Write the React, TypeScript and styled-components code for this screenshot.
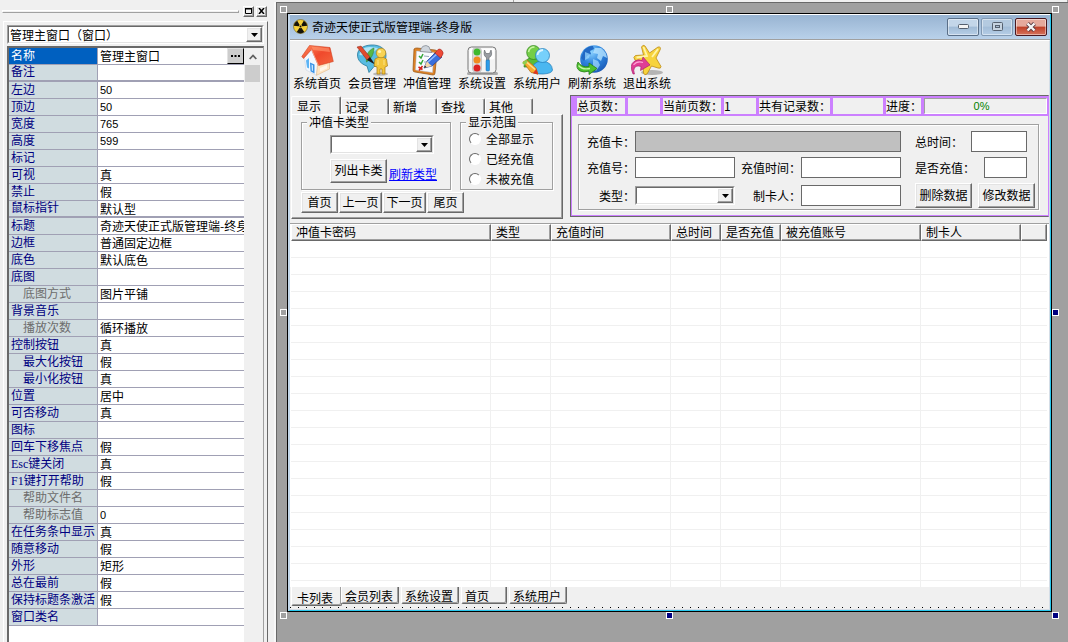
import React from "react";
import styled, { createGlobalStyle, css } from "styled-components";

const FACE = "#f0f0f0";
const SHADOW = "#a0a0a0";
const DARK = "#696969";
const PURPLE = "#cc80ff";

const GlobalStyle = createGlobalStyle`
  *, *::before, *::after { box-sizing: border-box; }
  body {
    margin: 0;
    background: ${SHADOW};
    color: #000;
    font: 12px/16px "Noto Sans CJK SC", "Liberation Sans", sans-serif;
  }
  button, input, select { font: inherit; color: inherit; border-radius: 0; margin: 0; padding: 0; }
`;

const raised = css`
  background: ${FACE};
  border: 1px solid;
  border-color: #fff ${DARK} ${DARK} #fff;
  box-shadow: inset -1px -1px 0 ${SHADOW}, inset 1px 1px 0 #e3e3e3;
`;

const Screen = styled.div`
  display: flex;
  flex-direction: column;
  min-height: 100vh;
`;

const TopStrip = styled.div`
  display: flex;
  height: 2px;
  flex: none;
  background: ${FACE};
`;

const StripSegment = styled.div<{ $grow: number }>`
  flex: ${(p) => p.$grow};
  border-right: 1px solid ${SHADOW};
`;

const Main = styled.div`
  display: flex;
  flex: 1;
`;

/* ---------- property sheet ---------- */

const Sidebar = styled.aside`
  flex: 0 0 276px;
  min-width: 0;
  display: flex;
  flex-direction: column;
  background: ${FACE};
  border-right: 2px solid #f8f8f8;
`;

const GripBar = styled.div`
  display: flex;
  align-items: center;
  gap: 2px;
  height: 19px;
  padding: 0 7px 1px 2px;
`;

const Grip = styled.div`
  flex: 1;
  height: 3px;
  margin-right: 2px;
  border: 1px solid;
  border-color: #fff ${SHADOW} ${SHADOW} #fff;
`;

const GripButton = styled.button`
  ${raised}
  width: 11px;
  height: 11px;
  display: grid;
  place-items: center;
`;

const SheetFrame = styled.div`
  flex: 1;
  display: flex;
  flex-direction: column;
  gap: 1px;
  margin: 0 6px 0 3px;
  padding: 3px 3px 0 3px;
  border-top: 1px solid #fff;
  border-left: 1px solid #fff;
  border-right: 1px solid ${DARK};
`;

const PickerBox = styled.div<{ $width?: number }>`
  position: relative;
  width: ${(p) => (p.$width ? `${p.$width}px` : "auto")};
  height: 19px;
  border: 1px solid;
  border-color: ${SHADOW} #fff #fff ${SHADOW};
`;

const Picker = styled.select`
  appearance: none;
  display: block;
  width: 100%;
  height: 17px;
  padding: 0 18px 0 1px;
  border: 1px solid;
  border-color: ${DARK} #e3e3e3 #e3e3e3 ${DARK};
  background: #fff;
  line-height: 15px;
  outline: none;
`;

const PickerArrow = styled.span`
  ${raised}
  position: absolute;
  top: 1px;
  right: 1px;
  width: 16px;
  height: 15px;
  display: grid;
  place-items: center;
  pointer-events: none;
`;

const SheetBody = styled.div`
  flex: 1;
  display: flex;
  margin-top: 1px;
  border: 2px solid ${DARK};
  border-bottom: 0;
  border-right: 1px solid ${SHADOW};
  background: #fff;
`;

const SheetRows = styled.div`
  flex: 1;
  min-width: 0;
`;

const PropTable = styled.table`
  width: 100%;
  table-layout: fixed;
  border-collapse: separate;
  border-spacing: 0;
`;

const labelColor = { normal: "#000080", muted: "#6d6d6d", active: "#fff" };

const PropLabel = styled.th<{ $tone: "normal" | "muted" | "active"; $indent: boolean; $group: boolean }>`
  height: 17px;
  padding: 0 0 0 ${(p) => (p.$indent ? 14 : 2)}px;
  border-right: 1px solid #a0a0b4;
  border-bottom: ${(p) => (p.$group ? 2 : 1)}px solid #a0a0b4;
  background: ${(p) => (p.$tone === "active" ? "#0060c0" : "#d0dce0")};
  color: ${(p) => labelColor[p.$tone]};
  font-family: "Liberation Serif", "Noto Sans CJK SC", serif;
  font-weight: 400;
  line-height: ${(p) => (p.$group ? 15 : 16)}px;
  text-align: left;
  white-space: nowrap;
`;

const PropValue = styled.td<{ $group: boolean }>`
  height: 17px;
  padding: 0;
  border-bottom: ${(p) => (p.$group ? 2 : 1)}px solid #a0a0b4;
  line-height: ${(p) => (p.$group ? 15 : 16)}px;
`;

const ValueLine = styled.div<{ $numeric: boolean }>`
  display: flex;
  padding-left: 2px;
  font-family: ${(p) => (p.$numeric ? '"Liberation Sans", sans-serif' : "inherit")};
  font-size: ${(p) => (p.$numeric ? 11 : 12)}px;
  overflow: hidden;
  white-space: nowrap;
`;

const MoreButton = styled.button`
  width: 17px;
  height: 16px;
  margin-left: auto;
  display: grid;
  place-items: center;
  background: #cdcdcd;
  border: 1px solid;
  border-color: #e3e3e3 #000 #000 #e3e3e3;
`;

const ScrollTrack = styled.div`
  flex: 0 0 19px;
  padding-left: 1px;
  background: ${FACE};
`;

const ScrollUp = styled.button`
  display: grid;
  place-items: center;
  width: 16px;
  height: 17px;
  border: 0;
  background: ${FACE};
`;

const ScrollThumb = styled.div`
  width: 15px;
  height: 17px;
  background: #cdcdcd;
`;

/* ---------- designer canvas ---------- */

const Canvas = styled.main`
  flex: 1;
  display: flex;
  min-width: 0;
  padding: 10px 16px 30px 10px;
  border-top: 1px solid ${DARK};
  border-left: 1px solid ${DARK};
  background: ${SHADOW};
`;

const DesignedWindow = styled.section`
  position: relative;
  flex: 1;
  display: flex;
  flex-direction: column;
  min-width: 0;
  border: 1px solid #000;
  background: ${FACE};
`;

const Handle = styled.span<{ $x: string; $y: string; $solid?: boolean }>`
  position: absolute;
  width: 7px;
  height: 7px;
  ${(p) => (p.$x === "left" ? "left: -8px;" : p.$x === "right" ? "right: -8px;" : "left: calc(50% - 4px);")}
  ${(p) => (p.$y === "top" ? "top: -8px;" : p.$y === "bottom" ? "bottom: -8px;" : "top: calc(50% - 4px);")}
  border: 1px solid #fff;
  background: ${(p) => (p.$solid ? "#000080" : "#a0a0a0")};
`;

const WindowInner = styled.div`
  flex: 1;
  display: flex;
  flex-direction: column;
  border-left: 2px solid #c3d7ea;
  border-right: 1px solid #28c8ee;
  border-bottom: 1px solid #28c8ee;
`;

const TitleBar = styled.header`
  display: flex;
  align-items: center;
  height: 26px;
  padding: 0 3px 1px 3px;
  background: linear-gradient(#98b4d2, #b9d1ea);
  border-top: 1px solid #fff;
  border-bottom: 1px solid ${SHADOW};
`;

const TitleText = styled.h1`
  flex: 1;
  margin: 0 0 0 4px;
  font-size: 12px;
  font-weight: 400;
  line-height: 16px;
`;

const captionTones = {
  plain: css`
    background: linear-gradient(#c3d6e9 0 45%, #a0bbd6 50%, #b7cee6);
    border-color: #5a6f88;
  `,
  faded: css`
    background: linear-gradient(#b4cae0 0 45%, #a3bdd8 50%, #b5cde6);
    border-color: #8198b2;
  `,
  close: css`
    background: linear-gradient(#e5a99c 0 45%, #bf3f27 50%, #d5735c);
    border-color: #4b1820;
  `,
};

const CaptionButton = styled.button<{ $tone: keyof typeof captionTones }>`
  width: 32px;
  height: 18px;
  margin-left: 2px;
  display: grid;
  place-items: center;
  border: 1px solid;
  border-radius: 2px;
  box-shadow: inset 0 0 0 1px rgba(255, 255, 255, 0.45);
  ${(p) => captionTones[p.$tone]}
`;

const WindowContent = styled.div`
  flex: 1;
  display: flex;
  flex-direction: column;
  border-top: 1px solid #fff;
  border-right: 1px solid #d5dde6;
  border-bottom: 1px solid #d5dde6;
`;

const Toolbar = styled.nav`
  display: flex;
  height: 54px;
`;

const ToolItem = styled.button`
  width: 55px;
  display: flex;
  flex-direction: column;
  align-items: center;
  padding: 3px 1px 0 0;
  border: 0;
  background: none;
  line-height: 14px;
  white-space: nowrap;
`;

const UpperRow = styled.div`
  display: flex;
  align-items: flex-start;
  gap: 7px;
  padding-left: 1px;
`;

const QueryPane = styled.div`
  flex: 0 0 272px;
  padding-top: 1px;
`;

const TabStrip = styled.div`
  display: flex;
  align-items: flex-end;
  height: 18px;
`;

const TopTab = styled.button<{ $active: boolean }>`
  width: ${(p) => (p.$active ? 50 : 48)}px;
  height: ${(p) => (p.$active ? 18 : 16)}px;
  padding-left: ${(p) => (p.$active ? 5 : 3)}px;
  border: 1px solid;
  border-color: #fff ${DARK} transparent #fff;
  border-bottom: 0;
  border-radius: 2px 2px 0 0;
  box-shadow: inset -1px 0 0 ${SHADOW};
  background: ${FACE};
  line-height: 14px;
  text-align: left;
`;

const TabBody = styled.div`
  display: flex;
  flex-direction: column;
  gap: 2px;
  padding: 0 8px 5px 9px;
  border: 1px solid;
  border-color: #fff ${DARK} ${DARK} #fff;
  box-shadow: inset -1px -1px 0 ${SHADOW};
`;

const GroupRow = styled.div`
  display: flex;
  gap: 9px;
`;

const Group = styled.fieldset<{ $width?: number }>`
  width: ${(p) => (p.$width ? `${p.$width}px` : "auto")};
  min-width: 0;
  margin: 0;
  padding: 0;
  border: 1px solid ${SHADOW};
  box-shadow: 1px 1px 0 #fff, inset 1px 1px 0 #fff;
`;

const Legend = styled.legend`
  margin-left: 5px;
  padding: 0 2px;
  background: ${FACE};
  line-height: 14px;
`;

const TypeControls = styled.div`
  display: flex;
  flex-direction: column;
  gap: 5px;
  padding: 6px 0 6px 28px;
`;

const ActionLine = styled.div`
  display: flex;
  align-items: center;
  gap: 2px;
`;

const PushButton = styled.button<{ $width: number; $height: number }>`
  ${raised}
  width: ${(p) => p.$width}px;
  height: ${(p) => p.$height}px;
  padding-bottom: 2px;
  line-height: 16px;
  white-space: nowrap;
`;

const TextLink = styled.a`
  padding-top: 6px;
  color: #0000ff;
  text-decoration: underline;
`;

const RadioLine = styled.label`
  display: flex;
  align-items: center;
  gap: 5px;
  height: 20px;
  padding-left: 8px;
`;

const Radio = styled.input`
  appearance: none;
  width: 12px;
  height: 12px;
  border: 1px solid;
  border-color: ${DARK} #fff #fff ${DARK};
  border-radius: 50%;
  background: #fff;
`;

const PagerRow = styled.div`
  display: flex;
  gap: 1px;
`;

const CardPane = styled.div`
  flex: 1;
  min-width: 0;
  border: 1px solid ${DARK};
  border-right: 1px solid ${PURPLE};
  box-shadow: inset 1px -1px 0 ${PURPLE};
`;

const StatusStrip = styled.div`
  display: flex;
  gap: 3px;
  padding: 2px 1px 2px 6px;
  background: ${PURPLE};
`;

const StatusCell = styled.div<{ $width: number }>`
  width: ${(p) => p.$width}px;
  height: 16px;
  background: ${FACE};
  white-space: nowrap;
`;

const Progress = styled.div`
  flex: 1;
  height: 16px;
  border: 1px solid;
  border-color: ${SHADOW} #fff #fff ${SHADOW};
  background: ${FACE};
  color: #008000;
  font: 11px/14px "Liberation Sans", sans-serif;
  text-align: center;
  padding-right: 8px;
`;

const CardGroup = styled(Group)`
  margin: 8px 9px 6px 7px;
`;

const CardForm = styled.div`
  display: grid;
  grid-template-columns: 49px minmax(60px, 1fr) 66px minmax(60px, 1fr) 134px;
  row-gap: 5px;
  align-items: center;
  padding: 6px 3px 1px 7px;
`;

const FieldLabel = styled.label`
  text-align: right;
  white-space: nowrap;
`;

const Field = styled.input<{ $wide?: boolean; $disabledLook?: boolean }>`
  grid-column: ${(p) => (p.$wide ? "span 3" : "auto")};
  width: 100%;
  min-width: 0;
  height: 21px;
  padding: 0 2px;
  border: 1px solid ${DARK};
  background: ${(p) => (p.$disabledLook ? "#c0c0c0" : "#fff")};
  outline: none;
`;

const SideCell = styled.div`
  display: flex;
  align-items: center;
  padding-left: 14px;
`;

const SideField = styled(Field)<{ $size: number }>`
  width: ${(p) => p.$size}px;
  margin: 0 8px 0 auto;
`;

const ButtonCell = styled(SideCell)`
  gap: 6px;
`;

const TablePane = styled.div`
  flex: 1;
  margin-top: 4px;
  padding: 0 2px 0 1px;
  border-top: 1px solid ${SHADOW};
  background: #fff;
`;

const CardTable = styled.table`
  width: 100%;
  table-layout: fixed;
  border-collapse: separate;
  border-spacing: 0;
`;

const HeadCell = styled.th`
  height: 17px;
  padding: 0 0 1px 4px;
  border: 1px solid;
  border-color: #fff ${DARK} ${DARK} #fff;
  box-shadow: inset -1px -1px 0 ${SHADOW};
  background: ${FACE};
  font-weight: 400;
  line-height: 14px;
  text-align: left;
  white-space: nowrap;
`;

const BodyCell = styled.td<{ $last: boolean }>`
  height: ${(p) => (p.$last ? 6 : 17)}px;
  padding: 0;
  border-right: 1px solid ${FACE};
  border-bottom: ${(p) => (p.$last ? 0 : 1)}px solid ${FACE};
  &:last-child { border-right: 0; }
`;

const BottomTabs = styled.div`
  display: flex;
  align-items: flex-start;
  gap: 2px;
  height: 20px;
  padding-left: 1px;
`;

const BottomTab = styled.button<{ $active: boolean; $width: number }>`
  width: ${(p) => p.$width}px;
  height: ${(p) => (p.$active ? 19 : 17)}px;
  margin-right: ${(p) => (p.$active ? -3 : 0)}px;
  padding: ${(p) => (p.$active ? "3px 0 0 5px" : "0 0 0 3px")};
  border: 1px solid;
  border-color: transparent ${DARK} ${DARK} #fff;
  border-top: 0;
  border-radius: 0 0 2px 2px;
  box-shadow: inset -1px -1px 0 ${SHADOW};
  background: ${FACE};
  line-height: 15px;
  text-align: left;
  white-space: nowrap;
`;

const DotRow = styled.div`
  height: 1px;
  margin-bottom: 1px;
  background: repeating-linear-gradient(90deg, #000 0 1px, transparent 1px 8px);
`;

/* ---------- drawings ---------- */

const ArrowDown = () => (
  <svg width="7" height="4" viewBox="0 0 7 4" aria-hidden="true">
    <path d="M0 0H7L3.5 4Z" fill="#000" />
  </svg>
);

const RadiationIcon = () => (
  <svg width="15" height="15" viewBox="0 0 15 15" aria-hidden="true">
    <circle cx="7.5" cy="7.5" r="7" fill="#f4d03a" stroke="#6b5b1c" strokeWidth=".6" />
    <path d="M7.5 7.5L.8 6.8A6.7 6.7 0 0 1 4.2 1.7ZM7.5 7.5L10.8 1.7A6.7 6.7 0 0 1 14.2 6.8ZM7.5 7.5L11.3 13.1A6.7 6.7 0 0 1 3.7 13.1Z" fill="#14120a" />
    <circle cx="7.5" cy="7.5" r="1.7" fill="#f4d03a" />
    <circle cx="7.5" cy="7.5" r="1" fill="#14120a" />
  </svg>
);

const HomeIcon = () => (
  <svg width="33" height="32" viewBox="0 0 33 32" aria-hidden="true">
    <defs>
      <linearGradient id="roof" x1="0" y1="0" x2="1" y2="1">
        <stop offset="0" stopColor="#ff8a5c" />
        <stop offset=".5" stopColor="#f0492c" />
        <stop offset="1" stopColor="#f4683e" />
      </linearGradient>
    </defs>
    <path d="M10.500 5.500L3.500 13.500L5 26L15.500 31.300L17 21Z" fill="#f3f8ff" stroke="#c2cddd" strokeWidth=".5" />
    <path d="M15.500 31.300L28.500 25V17L16.500 20Z" fill="#ffe6c4" stroke="#dcae7a" strokeWidth=".5" />
    <path d="M19 24L26 21V24.500L19 27.500Z" fill="#fff7ea" />
    <path d="M5 16.500L8 14V24.500L6 23.500Z" fill="#5db4f4" />
    <path d="M9 18.500L13.500 20.500V29.500L9.500 27.300Z" fill="#3b93e6" />
    <path d="M10.500 20.500L12 21.200V27L10.800 26.400Z" fill="#c7e7ff" />
    <path d="M8.500 1.500L29 3.500L32.300 17.500L17.500 21.500L10.500 5.500L2.500 14.500L.8 12.500Z" fill="url(#roof)" stroke="#d0401f" strokeWidth=".6" />
    <path d="M10.500 2.500L28 4.300L29 8L12 6Z" fill="#ff9a72" opacity=".6" />
    <path d="M10.500 5.500L17.500 21.500" stroke="#ffb095" strokeWidth=".8" />
  </svg>
);

const MemberIcon = () => (
  <svg width="33" height="32" viewBox="0 0 33 32" aria-hidden="true">
    <path d="M15 1C24 .5 30 5 30 11.500C30 18 25 22 18 22.500L13 28.500L11 22C5 20 1.500 16 1.500 11C1.500 5 7 1.500 15 1Z" fill="#58bce2" stroke="#27789c" strokeWidth=".8" />
    <path d="M14 3C8 3 3.500 6 3.500 11C10 12 18 9 22 4Z" fill="#c0ecf8" opacity=".85" />
    <path d="M18 4C12 6 9.500 12 10.500 18C15 15 18 10 18 4Z" fill="#58b847" stroke="#2e7a26" strokeWidth=".5" />
    <path d="M1 3L5 2L14 13L11 16Z" fill="#e14a2e" stroke="#8a2215" strokeWidth=".5" />
    <path d="M11 16L14 13L19 20.500Z" fill="#1c1c1c" />
    <ellipse cx="24.500" cy="30" rx="7.500" ry="1.800" fill="#8d8d8d" opacity=".55" />
    <path d="M19 15Q25 11 30.500 15L31.500 22L29 23V30H26V25H24V30H21V23L18 22Z" fill="#f3c63c" stroke="#a97a13" strokeWidth=".7" />
    <circle cx="25" cy="9" r="4.800" fill="#f8d353" stroke="#b08318" strokeWidth=".7" />
    <circle cx="23.500" cy="7.500" r="1.600" fill="#fff3b8" />
    <path d="M22 16V21M28 16V21" stroke="#fbe48a" />
  </svg>
);

const RechargeIcon = () => (
  <svg width="33" height="32" viewBox="0 0 33 32" aria-hidden="true">
    <path d="M3 5Q4 4 6 4L24 6Q26 6 26 8L24 29Q24 31 22 31L4 28Q2 28 2 26Z" fill="#dd8226" stroke="#93500f" strokeWidth=".7" />
    <path d="M5.500 7L23 8.500L21.500 28.500L4.500 26Z" fill="#f9fbff" stroke="#b5bfce" strokeWidth=".5" />
    <path d="M10 5Q11 1.500 15 1.500Q19 2 19 5.500L21 8.500L9 7.500Z" fill="#cfd5dc" stroke="#7b828c" strokeWidth=".7" />
    <path d="M8 12L10 14L12 10M8 18L10 20L12 16" fill="none" stroke="#36a63a" strokeWidth="1.500" />
    <path d="M7.500 23L11.500 25.500M11.500 22L8 26.500" stroke="#d51d17" strokeWidth="1.500" />
    <path d="M13 12L18 12.500M13 18H17" stroke="#9aa7ba" />
    <path d="M13 24L16 17L25 8L31 13L21 22Z" fill="#3a6fdc" stroke="#1b3b93" strokeWidth=".7" />
    <path d="M17 18L26 10" stroke="#93bdff" strokeWidth="1.500" />
    <path d="M24 9L27 5.500Q29 4 31 6.500T31.500 11L29.500 14Z" fill="#ee4a38" stroke="#a2231a" strokeWidth=".6" />
    <path d="M13 24L16 17Q18 20 21 22Z" fill="#f3d7ab" />
    <path d="M13 24L14 21.500L15.500 23.200Z" fill="#222" />
  </svg>
);

const SettingsIcon = () => (
  <svg width="33" height="32" viewBox="0 0 33 32" aria-hidden="true">
    <rect x="1" y="28" width="31" height="3" rx="1.500" fill="#a9a9a9" />
    <rect x="2" y="3" width="28" height="26" rx="3.500" fill="#f3f3f3" stroke="#777" />
    <rect x="3.500" y="4.500" width="25" height="11" rx="2" fill="#fff" />
    <rect x="6.500" y="4" width="9" height="24" rx="3" fill="#d9d9d9" stroke="#a5a5a5" strokeWidth=".5" />
    <circle cx="11" cy="8" r="3.500" fill="#3fb92e" />
    <circle cx="11" cy="16" r="3.500" fill="#f08a1f" />
    <circle cx="11" cy="24" r="3.500" fill="#dc2222" />
    <path d="M18.500 6Q17 12 20.500 13.500V17H23V13.500Q27 12 25 6L23.500 9.500H20Z" fill="#9a9ea3" stroke="#606468" strokeWidth=".6" />
    <rect x="20" y="16" width="3.500" height="11" rx="1" fill="#2d9be8" stroke="#1769aa" strokeWidth=".5" />
  </svg>
);

const UsersIcon = () => (
  <svg width="33" height="32" viewBox="0 0 33 32" aria-hidden="true">
    <path d="M3 23Q3 14 12 13.500Q19 14 20 23Z" fill="#59bd37" stroke="#2c7f18" strokeWidth=".7" />
    <ellipse cx="12.500" cy="8.500" rx="6.800" ry="7" fill="#74ce48" stroke="#2c7f18" strokeWidth=".7" />
    <path d="M7.500 8Q8.500 3 13.500 3" fill="none" stroke="#c9f5a5" strokeWidth="1.500" />
    <path d="M11 28Q10 18 21 17Q31 18 31.500 26Q31 29.500 22 30Q13 30 11 28Z" fill="#4bb7f0" stroke="#1a79b8" strokeWidth=".7" />
    <circle cx="21.500" cy="11.500" r="7" fill="#76d0fb" stroke="#1a79b8" strokeWidth=".7" />
    <path d="M16.500 11Q17 6.500 22 6" fill="none" stroke="#dcf6ff" strokeWidth="1.800" />
    <path d="M2 18L6 16L15 24L17 30L10 28.500Z" fill="#f8a92d" stroke="#b56a0d" strokeWidth=".7" />
    <path d="M1 19L5 15.500L7 18L3.500 21Z" fill="#8fce4f" />
    <path d="M12 29L17 30.500L15.500 25Z" fill="#dd3320" />
    <path d="M6 18.500L14 25.500" stroke="#ffe08c" strokeWidth="1.500" />
  </svg>
);

const RefreshIcon = () => (
  <svg width="33" height="32" viewBox="0 0 33 32" aria-hidden="true">
    <defs>
      <radialGradient id="globe" cx=".4" cy=".25" r=".8">
        <stop offset="0" stopColor="#8cd3ff" />
        <stop offset=".5" stopColor="#2e85de" />
        <stop offset="1" stopColor="#1a58b4" />
      </radialGradient>
    </defs>
    <circle cx="18" cy="15" r="13.800" fill="url(#globe)" />
    <path d="M8 6Q13 1.500 17 2L18 5L14 7L15 10L11 12L8 17L5 14Z" fill="#2169c4" />
    <path d="M19 4L25 4Q30.500 8 31 14L27 12L25 17L21 14L22 10L17 9Z" fill="#b7e4ff" opacity=".8" />
    <path d="M9 8L14 10L13 14L9 16Z" fill="#9bd9ff" opacity=".7" />
    <path d="M17 15L22 17L24 21L20 27L17 22Z" fill="#a5dcff" opacity=".7" />
    <path d="M2 18Q-1 24 4 27Q8 29 13 27V30.500L21 24.500L13 19V22.500Q6 24 2 18Z" fill="#4dc12e" stroke="#277f14" strokeWidth=".8" />
    <path d="M2.500 21.500Q6 26 14 24.500" fill="none" stroke="#c2f7a2" strokeWidth="1.300" />
  </svg>
);

const ExitIcon = () => (
  <svg width="33" height="32" viewBox="0 0 33 32" aria-hidden="true">
    <ellipse cx="21" cy="28.500" rx="11" ry="2.500" fill="#777" opacity=".5" />
    <path d="M10.500 3Q12 0 14 2L18.500 9L27 3Q30.500 2.500 29 6L25 14L30 22.500Q30 25 27 24L20.500 22L16 30Q13.500 32 12.500 29L12 20L4 16Q1.500 13 4.500 11.500L12.500 11Z" fill="#f7d33c" stroke="#bd8a16" strokeWidth=".8" />
    <path d="M12.500 3L16 12L5.500 13.500M27 5L21 13" fill="none" stroke="#fff4a8" strokeWidth="1.800" />
    <path d="M2 30Q-2 21 3 17.500Q7 14.500 11 16.500L12 13L19 21L9.500 26.500L10 22.500Q5 21 3.500 24Q2 26 3.500 30Z" fill="#e03c95" stroke="#a31765" strokeWidth=".6" />
    <path d="M2.500 21Q6 16.500 12 18.500" fill="none" stroke="#ffa3d4" strokeWidth="1.200" />
  </svg>
);

/* ---------- data ---------- */

type Prop = { name: string; value?: string; indent?: boolean; muted?: boolean; group?: boolean };

const properties: Prop[] = [
  { name: "名称", value: "管理主窗口" },
  { name: "备注", group: true },
  { name: "左边", value: "50" },
  { name: "顶边", value: "50" },
  { name: "宽度", value: "765" },
  { name: "高度", value: "599" },
  { name: "标记" },
  { name: "可视", value: "真" },
  { name: "禁止", value: "假" },
  { name: "鼠标指针", value: "默认型", group: true },
  { name: "标题", value: "奇迹天使正式版管理端-终身版" },
  { name: "边框", value: "普通固定边框" },
  { name: "底色", value: "默认底色" },
  { name: "底图" },
  { name: "底图方式", value: "图片平铺", indent: true, muted: true },
  { name: "背景音乐" },
  { name: "播放次数", value: "循环播放", indent: true, muted: true },
  { name: "控制按钮", value: "真" },
  { name: "最大化按钮", value: "假", indent: true },
  { name: "最小化按钮", value: "真", indent: true },
  { name: "位置", value: "居中" },
  { name: "可否移动", value: "真" },
  { name: "图标" },
  { name: "回车下移焦点", value: "假" },
  { name: "Esc键关闭", value: "真" },
  { name: "F1键打开帮助", value: "假" },
  { name: "帮助文件名", indent: true, muted: true },
  { name: "帮助标志值", value: "0", indent: true, muted: true },
  { name: "在任务条中显示", value: "真" },
  { name: "随意移动", value: "假" },
  { name: "外形", value: "矩形" },
  { name: "总在最前", value: "假" },
  { name: "保持标题条激活", value: "假" },
  { name: "窗口类名" },
];

const tools = [
  { label: "系统首页", Icon: HomeIcon },
  { label: "会员管理", Icon: MemberIcon },
  { label: "冲值管理", Icon: RechargeIcon },
  { label: "系统设置", Icon: SettingsIcon },
  { label: "系统用户", Icon: UsersIcon },
  { label: "刷新系统", Icon: RefreshIcon },
  { label: "退出系统", Icon: ExitIcon },
];

const topTabs = ["显示", "记录", "新增", "查找", "其他"];
const ranges = ["全部显示", "已经充值", "未被充值"];

const pagerButtons = [
  { label: "首页", width: 37 },
  { label: "上一页", width: 43 },
  { label: "下一页", width: 43 },
  { label: "尾页", width: 37 },
];

const statusCells = [
  { text: "总页数：", width: 48 },
  { text: "", width: 32 },
  { text: "当前页数：", width: 58 },
  { text: "1", width: 32 },
  { text: "共有记录数：", width: 71 },
  { text: "", width: 50 },
  { text: "进度：", width: 35 },
];

const columns = [
  { title: "冲值卡密码", width: 200 },
  { title: "类型", width: 60 },
  { title: "充值时间", width: 120 },
  { title: "总时间", width: 50 },
  { title: "是否充值", width: 60 },
  { title: "被充值账号", width: 140 },
  { title: "制卡人", width: 100 },
  { title: "", width: 0 },
];

const bodyRows = Array.from({ length: 21 }, (_, i) => i);

const bottomTabs = [
  { label: "卡列表", width: 51 },
  { label: "会员列表", width: 58 },
  { label: "系统设置", width: 58 },
  { label: "首页", width: 46 },
  { label: "系统用户", width: 58 },
];

/* ---------- parts ---------- */

function PropertySheet() {
  return (
    <Sidebar>
      <GripBar>
        <Grip />
        <GripButton aria-label="最大化">
          <svg width="7" height="6" viewBox="0 0 7 6" aria-hidden="true">
            <path d="M.5 1H6.500V5.500H.5Z" fill="none" stroke="#000" />
            <path d="M0 .5H7" stroke="#000" />
          </svg>
        </GripButton>
        <GripButton aria-label="关闭">
          <svg width="7" height="6" viewBox="0 0 7 6" aria-hidden="true">
            <path d="M1 0L6 6M6 0L1 6" stroke="#000" strokeWidth="1.500" />
          </svg>
        </GripButton>
      </GripBar>
      <SheetFrame>
        <PickerBox>
          <Picker aria-label="组件" defaultValue="main">
            <option value="main">管理主窗口（窗口）</option>
          </Picker>
          <PickerArrow><ArrowDown /></PickerArrow>
        </PickerBox>
        <SheetBody>
          <SheetRows>
            <PropTable>
              <colgroup>
                <col style={{ width: 89 }} />
                <col />
              </colgroup>
              <tbody>
                {properties.map((p, i) => (
                  <tr key={p.name}>
                    <PropLabel
                      scope="row"
                      $tone={i === 0 ? "active" : p.muted ? "muted" : "normal"}
                      $indent={!!p.indent}
                      $group={!!p.group}
                    >
                      {p.name}
                    </PropLabel>
                    <PropValue $group={!!p.group}>
                      <ValueLine $numeric={/^\d+$/.test(p.value ?? "")}>
                        {p.value}
                        {i === 0 && (
                          <MoreButton aria-label="编辑名称">
                            <svg width="9" height="2" viewBox="0 0 9 2" aria-hidden="true">
                              <path d="M0 1H2M3.500 1H5.500M7 1H9" stroke="#000" strokeWidth="2" />
                            </svg>
                          </MoreButton>
                        )}
                      </ValueLine>
                    </PropValue>
                  </tr>
                ))}
              </tbody>
            </PropTable>
          </SheetRows>
          <ScrollTrack>
            <ScrollUp aria-label="向上滚动">
              <svg width="8" height="6" viewBox="0 0 8 6" aria-hidden="true">
                <path d="M.7 5L4 1.500L7.300 5" fill="none" stroke="#606060" strokeWidth="1.800" />
              </svg>
            </ScrollUp>
            <ScrollThumb />
          </ScrollTrack>
        </SheetBody>
      </SheetFrame>
    </Sidebar>
  );
}

function QueryTabs() {
  return (
    <QueryPane>
      <TabStrip role="tablist">
        {topTabs.map((t, i) => (
          <TopTab key={t} role="tab" aria-selected={i === 0} $active={i === 0}>{t}</TopTab>
        ))}
      </TabStrip>
      <TabBody>
        <GroupRow>
          <Group $width={150}>
            <Legend>冲值卡类型</Legend>
            <TypeControls>
              <PickerBox $width={104}>
                <Picker aria-label="冲值卡类型" />
                <PickerArrow><ArrowDown /></PickerArrow>
              </PickerBox>
              <ActionLine>
                <PushButton $width={57} $height={24}>列出卡类</PushButton>
                <TextLink href="#types">刷新类型</TextLink>
              </ActionLine>
            </TypeControls>
          </Group>
          <Group $width={93}>
            <Legend>显示范围</Legend>
            {ranges.map((r) => (
              <RadioLine key={r}>
                <Radio type="radio" name="range" />
                {r}
              </RadioLine>
            ))}
          </Group>
        </GroupRow>
        <PagerRow>
          {pagerButtons.map((b) => (
            <PushButton key={b.label} $width={b.width} $height={21}>{b.label}</PushButton>
          ))}
        </PagerRow>
      </TabBody>
    </QueryPane>
  );
}

function CardDetails() {
  return (
    <CardPane>
      <StatusStrip>
        {statusCells.map((c, i) => (
          <StatusCell key={i} $width={c.width}>{c.text}</StatusCell>
        ))}
        <Progress role="progressbar" aria-valuenow={0} aria-label="进度">0%</Progress>
      </StatusStrip>
      <CardGroup>
        <CardForm>
          <FieldLabel htmlFor="card">充值卡：</FieldLabel>
          <Field id="card" $wide $disabledLook readOnly />
          <SideCell>
            <FieldLabel htmlFor="total">总时间：</FieldLabel>
            <SideField id="total" $size={56} />
          </SideCell>

          <FieldLabel htmlFor="number">充值号：</FieldLabel>
          <Field id="number" />
          <FieldLabel htmlFor="time">充值时间：</FieldLabel>
          <Field id="time" />
          <SideCell>
            <FieldLabel htmlFor="used">是否充值：</FieldLabel>
            <SideField id="used" $size={43} />
          </SideCell>

          <FieldLabel htmlFor="kind">类型：</FieldLabel>
          <PickerBox>
            <Picker id="kind" />
            <PickerArrow><ArrowDown /></PickerArrow>
          </PickerBox>
          <FieldLabel htmlFor="maker">制卡人：</FieldLabel>
          <Field id="maker" />
          <ButtonCell>
            <PushButton $width={57} $height={25}>删除数据</PushButton>
            <PushButton $width={57} $height={25}>修改数据</PushButton>
          </ButtonCell>
        </CardForm>
      </CardGroup>
    </CardPane>
  );
}

function CardList() {
  return (
    <TablePane>
      <CardTable>
        <colgroup>
          {columns.map((c, i) => (
            <col key={i} style={c.width ? { width: c.width } : undefined} />
          ))}
        </colgroup>
        <thead>
          <tr>
            {columns.map((c, i) => (
              <HeadCell key={i} scope="col">{c.title}</HeadCell>
            ))}
          </tr>
        </thead>
        <tbody>
          {bodyRows.map((r) => (
            <tr key={r}>
              {columns.map((_, i) => (
                <BodyCell key={i} $last={r === bodyRows.length - 1} />
              ))}
            </tr>
          ))}
        </tbody>
      </CardTable>
    </TablePane>
  );
}

export default function App() {
  return (
    <Screen>
      <GlobalStyle />
      <TopStrip>
        <StripSegment $grow={514} />
        <StripSegment $grow={554} />
      </TopStrip>
      <Main>
        <PropertySheet />
        <Canvas>
          <DesignedWindow>
            <WindowInner>
              <TitleBar>
                <RadiationIcon />
                <TitleText>奇迹天使正式版管理端-终身版</TitleText>
                <CaptionButton $tone="plain" aria-label="最小化">
                  <svg width="11" height="5" viewBox="0 0 11 5" aria-hidden="true">
                    <rect x=".5" y=".5" width="10" height="4" rx="1" fill="#f4f4f4" stroke="#55606f" />
                  </svg>
                </CaptionButton>
                <CaptionButton $tone="faded" aria-label="最大化">
                  <svg width="11" height="9" viewBox="0 0 11 9" aria-hidden="true">
                    <rect x=".5" y=".5" width="10" height="8" rx="1" fill="#c6d3e0" stroke="#55606f" />
                    <rect x="3.500" y="3.500" width="4" height="2" fill="#a9bdd3" stroke="#55606f" />
                  </svg>
                </CaptionButton>
                <CaptionButton $tone="close" aria-label="关闭">
                  <svg width="12" height="10" viewBox="0 0 12 10" aria-hidden="true">
                    <path d="M2.500 1.500L9.500 8.500M9.500 1.500L2.500 8.500" stroke="#5c3a42" strokeWidth="4" />
                    <path d="M2.500 1.500L9.500 8.500M9.500 1.500L2.500 8.500" stroke="#f6f6f6" strokeWidth="2.400" />
                  </svg>
                </CaptionButton>
              </TitleBar>
              <WindowContent>
                <Toolbar>
                  {tools.map(({ label, Icon }) => (
                    <ToolItem key={label}>
                      <Icon />
                      {label}
                    </ToolItem>
                  ))}
                </Toolbar>
                <UpperRow>
                  <QueryTabs />
                  <CardDetails />
                </UpperRow>
                <CardList />
                <BottomTabs role="tablist">
                  {bottomTabs.map((t, i) => (
                    <BottomTab key={t.label} role="tab" aria-selected={i === 0} $active={i === 0} $width={t.width}>
                      {t.label}
                    </BottomTab>
                  ))}
                </BottomTabs>
                <DotRow />
              </WindowContent>
            </WindowInner>
            <Handle $x="left" $y="top" />
            <Handle $x="mid" $y="top" />
            <Handle $x="right" $y="top" />
            <Handle $x="left" $y="mid" />
            <Handle $x="right" $y="mid" $solid />
            <Handle $x="left" $y="bottom" />
            <Handle $x="mid" $y="bottom" $solid />
            <Handle $x="right" $y="bottom" $solid />
          </DesignedWindow>
        </Canvas>
      </Main>
    </Screen>
  );
}
